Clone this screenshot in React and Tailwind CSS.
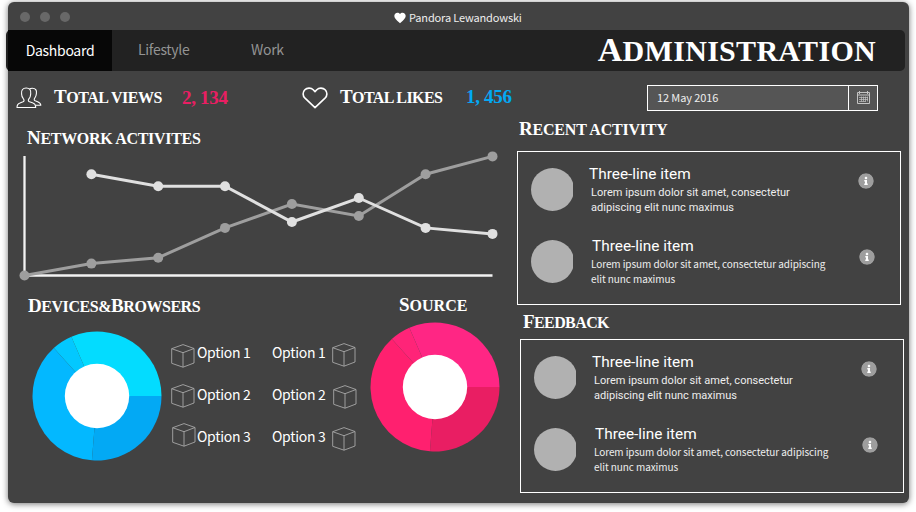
import React from "react";
import { FaInfoCircle } from "react-icons/fa";
import { IoMdHeart } from "react-icons/io";

const SANS = "font-['Noto_Sans_CJK_SC',sans-serif]";
const DISPLAY = "font-['Liberation_Serif',serif] font-bold uppercase text-white whitespace-nowrap";

function Heading({ children, className }) {
  return (
    <h2 className={`${DISPLAY} text-[16px] leading-5 first-letter:text-[19px] ${className}`}>
      {children}
    </h2>
  );
}

function Users() {
  return (
    <svg className="h-[22px] w-[26px] fill-none stroke-white" viewBox="0 0 26 22" strokeWidth="1.1" strokeLinejoin="round">
      <path d="M1 20.500 C1 17.500 2 16.600 4 16 L7 14.800 C8.300 14.200 8.300 13.200 7.500 12 C6 10.300 5.600 9 5.600 7 C5 3 7 1 10.200 1 C13.500 1 15.300 3 14.700 7 C14.600 9.500 14 10.800 12.800 12 C12 13.200 12.200 14.200 13.500 14.800 L17 16 C19 16.600 19.700 17.800 19.700 20.500 Z" />
      <path d="M13.500 2 C14.300 1.300 15.300 1.200 16.300 1.200 C19.600 1.200 20.900 3.200 20.400 6.600 C20.300 8.800 19.700 10 18.600 11.300 C17.900 12.500 18.200 13.300 19.200 13.800 L21.600 14.700 C23.800 15.500 24.700 16.200 24.800 18.300 H19.700" />
    </svg>
  );
}

function HeartOutline() {
  return (
    <svg className="h-[22px] w-[26px] fill-none stroke-white" viewBox="0 0 26 22" strokeWidth="1.6" strokeLinejoin="round">
      <path d="M13 20.700 L3 11.200 C0.500 8.700 0.500 5 2.800 2.800 C5 0.600 9 0.500 11.200 2.700 L13 4.600 L14.800 2.700 C17 0.500 21 0.600 23.200 2.800 C25.500 5 25.500 8.700 23 11.200 Z" />
    </svg>
  );
}

function CalendarIcon() {
  return (
    <svg className="h-[13px] w-[13px] fill-none stroke-[#c4c4c4]" viewBox="0 0 13 13">
      <path d="M0.500 1.500 H12.500 V12.500 H0.500 Z M0.500 4 H12.500" />
      <path d="M2.500 0 V3 M10.500 0 V3" />
      <path d="M4.500 5.500 V10.500 M6.500 5.500 V10.500 M8.500 5.500 V10.500 M10.500 5.500 V10.500 M2 6.500 H11 M2 8.500 H11 M2 10.500 H9" strokeWidth="0.700" />
    </svg>
  );
}

function Cube({ className }) {
  return (
    <svg className={`h-6 w-6 shrink-0 fill-none stroke-[#a8a8a8] ${className}`} viewBox="0 0 24 24" strokeWidth="0.900" strokeLinejoin="round">
      <path d="M12 0.600 L23 4.500 V19 L12 23.200 L0.700 19.300 V4.700 Z M0.700 4.700 L12 8.700 L23 4.500 M12 8.700 V23.200" />
    </svg>
  );
}

const STOPS = [0, 94.5, 228, 246.6, 360];

function Donut({ colors, className }) {
  const point = (deg, r) => {
    const a = (deg * Math.PI) / 180;
    return `${(65 + r * Math.cos(a)).toFixed(2)} ${(65 + r * Math.sin(a)).toFixed(2)}`;
  };
  return (
    <svg className={`h-[130px] w-[130px] ${className}`} viewBox="0 0 130 130">
      {colors.map((color, i) => (
        <path key={color} fill={color} d={`M65 65 L${point(STOPS[i], 64.5)} A64.5 64.5 0 0 1 ${point(STOPS[i + 1], 64.5)} Z`} />
      ))}
      <circle cx="65" cy="65" r="32.2" fill="#fff" />
    </svg>
  );
}

const XS = [24.5, 91.4, 158.2, 225, 291.9, 358.8, 425.6, 492.5];
const GRAY = [275.5, 263.6, 257.7, 227.9, 204, 216, 174.2, 156.4];
const LIGHT = [null, 174.2, 186.2, 186.2, 222, 198, 227.9, 233.9];

function Series({ values, color }) {
  const pts = values.map((y, i) => [XS[i], y]).filter((p) => p[1] !== null);
  return (
    <g fill={color}>
      <polyline points={pts.map((p) => p.join(",")).join(" ")} fill="none" stroke={color} strokeWidth="3" />
      {pts.map(([x, y]) => (
        <circle key={x} cx={x} cy={y} r="5" />
      ))}
    </g>
  );
}

function Chart() {
  return (
    <svg className="h-[140px] w-[500px]" viewBox="8 150 500 140">
      <path d="M24.500 156 V275.500 H492.500" fill="none" stroke="#f2f2f2" strokeWidth="2.300" />
      <Series values={GRAY} color="#9e9e9e" />
      <Series values={LIGHT} color="#e0e0e0" />
    </svg>
  );
}

function Item({ titleClass, bodyClass, iconClass, lines }) {
  return (
    <div className="flex h-[72px]">
      <div className="mt-4 h-[43px] w-[42px] shrink-0 overflow-hidden">
        <div className="h-[43px] w-[43px] rounded-full bg-[#b1b1b1]" />
      </div>
      <div className="ml-[15px] w-[260px] whitespace-nowrap pt-3">
        <h3 className={`font-[Roboto,sans-serif] text-[15.4px] leading-5 text-white ${titleClass}`}>Three-line item</h3>
        <p className={`ml-[3px] leading-[15px] text-[#eee] ${bodyClass}`}>
          {lines[0]}
          <br />
          {lines[1]}
        </p>
      </div>
      <FaInfoCircle className={`h-4 w-4 rounded-full bg-[radial-gradient(circle,#fff_55%,transparent_56%)] text-[#9e9e9e] ${iconClass}`} />
    </div>
  );
}

function Panel({ className }) {
  return (
    <div className={`h-[154px] w-[384px] border border-white pl-[13px] ${className}`}>
      <Item
        titleClass="ml-px"
        bodyClass="mt-px font-[Roboto,sans-serif] text-[11px] tracking-[0.03px]"
        iconClass="ml-2.5 mt-[21px]"
        lines={["Lorem ipsum dolor sit amet, consectetur", "adipiscing elit nunc maximus"]}
      />
      <Item
        titleClass="ml-1"
        bodyClass="font-['Noto_Sans_CJK_SC',sans-serif] text-[10px] tracking-[-0.08px]"
        iconClass="ml-[11px] mt-[25px]"
        lines={["Lorem ipsum dolor sit amet, consectetur adipiscing", "elit nunc maximus"]}
      />
    </div>
  );
}

export default function App() {
  return (
    <div className={`h-[512px] w-[916px] overflow-hidden bg-white pl-2 pt-0.5 ${SANS}`}>
      <div className="h-[501px] w-[901px] rounded-[6px] bg-[#424242] shadow-[0_1px_6px_rgba(0,0,0,0.55)]">
        <header className="flex h-7 items-center">
          <div className="ml-[12px] mt-0.5 flex gap-2.5">
            <i className="h-2.5 w-2.5 rounded-full bg-[#686868]" />
            <i className="h-2.5 w-2.5 rounded-full bg-[#686868]" />
            <i className="h-2.5 w-2.5 rounded-full bg-[#686868]" />
          </div>
          <IoMdHeart className="ml-[323px] mt-1 h-[14px] w-[14px] text-white" />
          <span className="ml-0.5 mt-0.5 text-[11px] leading-4 tracking-[-0.15px] text-[#eee]">Pandora Lewandowski</span>
        </header>

        <nav className="-ml-0.5 flex h-[41px] w-[899px] items-center rounded-[5px] bg-[#222] pl-0.5 text-[14px] tracking-[-0.3px] text-[#949494]">
          <a className="-mt-px flex h-full w-[104px] items-center justify-center bg-[#070707] pt-px text-white">Dashboard</a>
          <a className="-mt-0.5 ml-[26px] w-[113px]">Lifestyle</a>
          <a className="-mt-0.5">Work</a>
          <h1 className={`${DISPLAY} ml-auto mr-[29px] text-[30px] leading-10 tracking-[0.3px] first-letter:text-[34px]`}>Administration</h1>
        </nav>

        <div className="flex">
          <section className="w-[509px] shrink-0">
            <div className="flex h-[54px] items-center pl-2">
              <Users />
              <Heading className="-mt-0.5 ml-3 w-[128px] tracking-[-0.45px]">Total views</Heading>
              <span className={`${DISPLAY} w-[120px] text-[19px] tracking-[-0.3px] !text-[#e91e63]`}>2, 134</span>
              <HeartOutline />
              <Heading className="-mt-0.5 ml-3 w-[126px] tracking-[-0.6px]">Total likes</Heading>
              <span className={`${DISPLAY} -mt-0.5 text-[19px] tracking-[-0.3px] !text-[#03a9f4]`}>1, 456</span>
            </div>
            <Heading className="mb-px ml-[19px] mt-[3px] tracking-[-0.3px]">Network activites</Heading>
            <Chart />
            <div className="flex">
              <div className="w-[163px] pt-[6px]">
                <h2 className={`${DISPLAY} ml-5 text-[16px] leading-5 tracking-[-0.45px]`}>
                  <span className="text-[19px]">D</span>evices&amp;<span className="text-[19px]">B</span>rowsers
                </h2>
                <Donut className="ml-6 mt-3.5" colors={["#03a9f4", "#03b8ff", "#03c8ff", "#03dcff"]} />
              </div>
              <div className="flex w-[82px] flex-col whitespace-nowrap pt-[41px] text-[14px] tracking-[-0.3px] text-white">
                <div className="flex h-[42px] items-center gap-0.5"><Cube className="mt-[7px]" />Option 1</div>
                <div className="flex h-[42px] items-center gap-0.5"><Cube className="mt-[3px]" />Option 2</div>
                <div className="flex h-[42px] items-center gap-0.5"><Cube className="-mt-0.5 ml-px -mr-px" />Option 3</div>
              </div>
              <div className="ml-[19px] flex w-[98px] flex-col pt-[41px] text-[14px] tracking-[-0.3px] text-white">
                <div className="flex h-[42px] items-center"><span className="w-[60px]">Option 1</span><Cube className="mt-[5px]" /></div>
                <div className="flex h-[42px] items-center"><span className="w-[61px]">Option 2</span><Cube className="mt-[5px]" /></div>
                <div className="flex h-[42px] items-center"><span className="w-[60px]">Option 3</span><Cube className="mt-[6px]" /></div>
              </div>
              <div className="pt-[5px]">
                <Heading className="ml-[29px]">Source</Heading>
                <Donut className="mt-1.5" colors={["#e91e63", "#ff206f", "#ff2478", "#ff2684"]} />
              </div>
            </div>
          </section>

          <section>
            <div className="ml-[130px] mt-3.5 flex h-[26px] w-[231px] border border-white bg-[#555] text-[11px] leading-4 tracking-[-0.1px] text-[#eee]">
              <span className="flex w-[200px] items-center pb-0.5 pl-[9px]">12 May 2016</span>
              <span className="flex flex-1 items-center justify-center border-l border-white pb-0.5"><CalendarIcon /></span>
            </div>
            <Heading className="ml-0.5 mt-2 tracking-[-0.2px]">Recent activity</Heading>
            <Panel className="mt-[11px]" />
            <Heading className="ml-1.5 mt-[7px] tracking-[-0.6px]">Feedback</Heading>
            <Panel className="ml-[3px] mt-[6px]" />
          </section>
        </div>
      </div>
    </div>
  );
}
